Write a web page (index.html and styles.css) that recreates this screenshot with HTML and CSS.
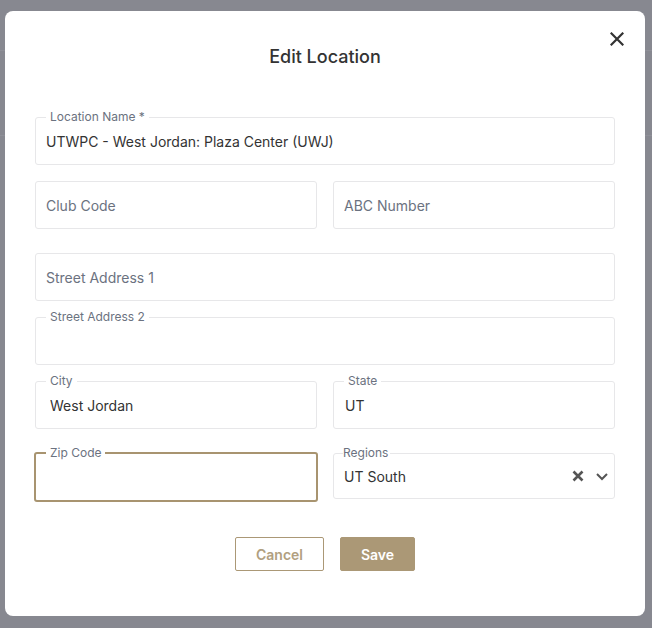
FILE: index.html
```html
<!DOCTYPE html>
<html lang="en">
<head>
  <meta charset="UTF-8" />
  <meta name="viewport" content="width=device-width, initial-scale=1.0" />
  <title>Edit Location</title>
  <link rel="stylesheet" href="styles.css">
</head>
<body>
  <div class="backdrop">
    <div class="modal">
      <button class="close" aria-label="Close">
        <svg width="14" height="14" viewBox="0 0 14 14"><path d="M1.5 1.5 L12.5 12.5 M12.5 1.5 L1.5 12.5" stroke="#333" stroke-width="2.2" stroke-linecap="square" fill="none"/></svg>
      </button>
      <h2 class="title">Edit Location</h2>

      <form class="form">
        <div class="row">
          <div class="field">
            <span class="label">Location Name *</span>
            <input type="text" class="slim" value="UTWPC - West Jordan: Plaza Center (UWJ)" />
          </div>
        </div>

        <div class="row two">
          <div class="field"><input type="text" class="slim" placeholder="Club Code" /></div>
          <div class="field"><input type="text" class="slim" placeholder="ABC Number" /></div>
        </div>

        <div class="row spaced">
          <div class="field"><input type="text" class="slim" placeholder="Street Address 1" /></div>
        </div>

        <div class="row">
          <div class="field">
            <span class="label">Street Address 2</span>
            <input type="text" value="" />
          </div>
        </div>

        <div class="row two">
          <div class="field">
            <span class="label">City</span>
            <input type="text" value="West Jordan" />
          </div>
          <div class="field">
            <span class="label">State</span>
            <input type="text" class="mid" value="UT" />
          </div>
        </div>

        <div class="row two spaced">
          <div class="field focused">
            <span class="label">Zip Code</span>
            <input type="text" value="" />
          </div>
          <div class="field select">
            <span class="label tight">Regions</span>
            <span class="select-value">UT South</span>
            <span class="select-icons">
              <svg width="12" height="12" viewBox="0 0 12 12"><path d="M1.5 1.5 L10.5 10.5 M10.5 1.5 L1.5 10.5" stroke="#555" stroke-width="2.6" fill="none"/></svg>
              <svg width="14" height="10" viewBox="0 0 14 10"><path d="M2 3 L7 8 L12 3" stroke="#555" stroke-width="2" fill="none"/></svg>
            </span>
          </div>
        </div>

        <div class="actions">
          <button type="button" class="btn cancel">Cancel</button>
          <button type="button" class="btn save">Save</button>
        </div>
      </form>
    </div>
  </div>
</body>
</html>
```

FILE: styles.css
```css
body {
  margin: 0;
  padding: 0;
  font-family: Inter, "Noto Sans", sans-serif;
  color: #333;
}

.backdrop {
  min-height: 628px;
  box-sizing: border-box;
  padding: 11px 7px 12px 5px;
  background-color: #878890;
  background-image:
    linear-gradient(to bottom, transparent 50px, #8f9098 50px, #8f9098 51px, transparent 51px),
    linear-gradient(to bottom, transparent 135px, #8f9098 135px, #8f9098 136px, transparent 136px);
}

.modal {
  position: relative;
  background: #fff;
  border-radius: 8px;
  height: 605px;
  box-sizing: border-box;
  padding: 34px 30px 0;
}

.close {
  position: absolute;
  top: 21px;
  right: 21px;
  border: none;
  background: none;
  padding: 0;
  width: 14px;
  height: 14px;
  cursor: pointer;
}

.close svg {
  display: block;
}

.title {
  margin: 0 0 48px;
  text-align: center;
  font-size: 18px;
  font-weight: 500;
  line-height: 24px;
  color: #333;
}

.form {
  display: flex;
  flex-direction: column;
  gap: 16px;
}

.row {
  display: flex;
  align-items: flex-start;
  gap: 16px;
}

.row.spaced {
  margin-top: 8px;
}

.field {
  position: relative;
  flex: 1;
  height: 48px;
  box-sizing: border-box;
  border: 1px solid #e7e7e9;
  border-radius: 3px;
  display: flex;
  align-items: center;
}

.field.focused {
  border: 2px solid #a89470;
  margin: -1px;
  height: 50px;
  flex: 1 1 0;
}

.field.select {
  height: 46px;
}

.label {
  position: absolute;
  top: -8px;
  left: 10px;
  padding: 0 4px;
  background: #fff;
  font-size: 12px;
  line-height: 14px;
  color: #6b7280;
}

.label.tight {
  left: 9px;
  padding: 0 2px 0 0;
}

.field input {
  width: 100%;
  border: none;
  outline: none;
  background: transparent;
  font-family: inherit;
  font-size: 14px;
  color: #333;
  padding: 0 14px;
}

.field input.slim {
  padding-left: 10px;
}

.field input.mid {
  padding-left: 11px;
}

.field input::placeholder {
  color: #6b7280;
}

.select-value {
  flex: 1;
  padding-left: 10px;
  font-size: 14px;
  color: #333;
}

.select-icons {
  display: flex;
  align-items: center;
  gap: 11px;
  padding-right: 5px;
}

.select-icons svg {
  display: block;
}

.actions {
  display: flex;
  justify-content: center;
  gap: 16px;
  margin-top: 20px;
}

.btn {
  font-family: inherit;
  font-size: 14px;
  font-weight: 600;
  border-radius: 2px;
  cursor: pointer;
  height: 34px;
}

.btn.cancel {
  width: 89px;
  background: #fff;
  border: 1px solid #ab9876;
  color: #b1a07f;
}

.btn.save {
  width: 75px;
  background: #ab9876;
  border: 1px solid #ab9876;
  color: #fff;
}
```
